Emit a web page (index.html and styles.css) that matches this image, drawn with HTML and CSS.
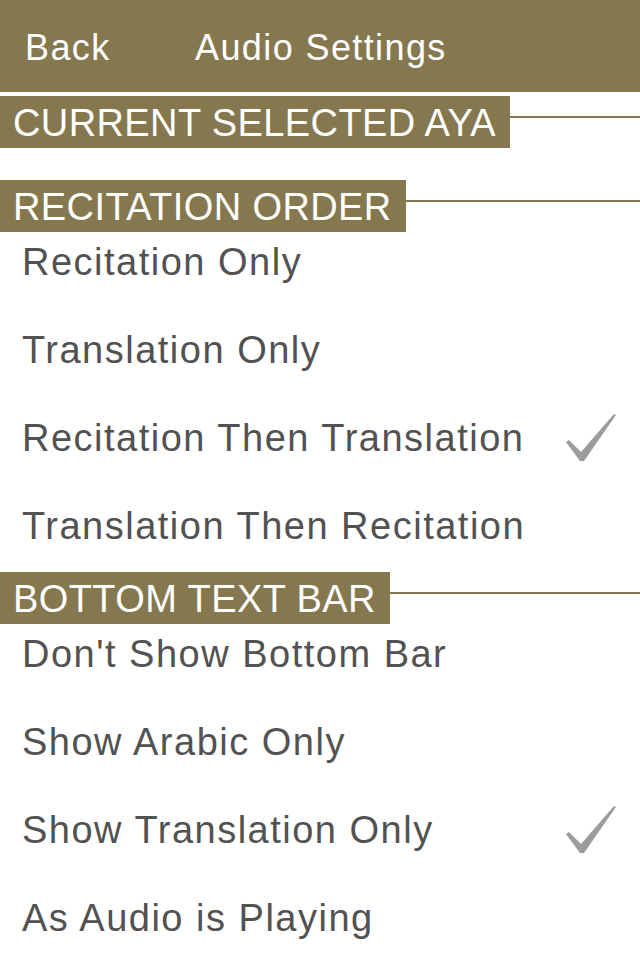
FILE: index.html
```html
<!DOCTYPE html>
<html>
<head>
<meta charset="utf-8">
<link rel="stylesheet" href="styles.css">
</head>
<body>
<header class="nav">
  <span class="nav-back">Back</span>
  <span class="nav-title">Audio Settings</span>
</header>

<section class="group">
  <div class="group-head"><span class="tag">CURRENT SELECTED AYA</span><span class="rule"></span></div>
  <div class="row row-hidden"><span class="row-text">Surah Al-Fatiha 1:1</span></div>
</section>

<section class="group">
  <div class="group-head"><span class="tag">RECITATION ORDER</span><span class="rule"></span></div>
  <div class="row"><span class="row-text">Recitation Only</span></div>
  <div class="row"><span class="row-text">Translation Only</span></div>
  <div class="row"><span class="row-text">Recitation Then Translation</span>
    <svg class="check" viewBox="0 0 50 48" width="50" height="48"><polygon points="0,28 3,26 15,38 48,0 50,1 18,47 14,47"/></svg>
  </div>
  <div class="row"><span class="row-text">Translation Then Recitation</span></div>
</section>

<section class="group">
  <div class="group-head"><span class="tag">BOTTOM TEXT BAR</span><span class="rule"></span></div>
  <div class="row"><span class="row-text">Don't Show Bottom Bar</span></div>
  <div class="row"><span class="row-text">Show Arabic Only</span></div>
  <div class="row"><span class="row-text">Show Translation Only</span>
    <svg class="check" viewBox="0 0 50 48" width="50" height="48"><polygon points="0,28 3,26 15,38 48,0 50,1 18,47 14,47"/></svg>
  </div>
  <div class="row"><span class="row-text">As Audio is Playing</span></div>
</section>
</body>
</html>
```
FILE: styles.css
```css
html, body {
  margin: 0;
  padding: 0;
  background: #ffffff;
  font-family: "Liberation Sans", Arial, sans-serif;
  overflow: hidden;
}
body {
  width: 640px;
  height: 960px;
}
.nav {
  height: 92px;
  background: #85784f;
  color: #ffffff;
  display: flex;
  align-items: center;
  padding: 4px 0 0 25px;
  box-sizing: border-box;
  font-size: 36px;
  line-height: 1;
  letter-spacing: 1.4px;
  margin-bottom: 4px;
}
.nav-back {
  width: 170px;
}
.group-head {
  display: flex;
  height: 40px;
  position: relative;
  z-index: 2;
}
.tag {
  height: 52px;
  line-height: 54px;
  background: #85784f;
  color: #ffffff;
  font-size: 38px;
  letter-spacing: 0.4px;
  padding: 0 14px 0 13px;
  white-space: nowrap;
}
.rule {
  flex: 1;
  height: 2px;
  margin-top: 20px;
  background: #85784f;
}
.row {
  height: 88px;
  display: flex;
  align-items: center;
  justify-content: space-between;
  padding: 0 24px 4px 22px;
  box-sizing: border-box;
  color: #525252;
  font-size: 38px;
  line-height: 1;
  letter-spacing: 1.5px;
  white-space: nowrap;
}
.row-hidden {
  height: 44px;
  align-items: flex-start;
  overflow: hidden;
  padding: 0 24px 0 22px;
}
.row-hidden .row-text {
  margin-top: -20px;
}
.check {
  fill: #9c9c9c;
  display: block;
}
```
